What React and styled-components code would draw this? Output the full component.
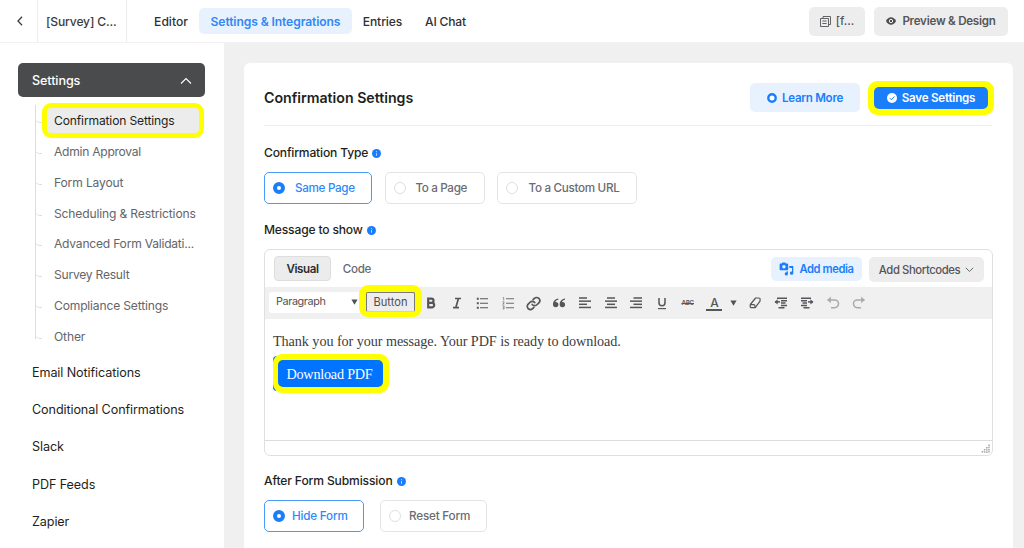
import React from "react";
import styled, { createGlobalStyle, css } from "styled-components";

const blue = "#1a7efb";
const yellow = "#ffff00";

const GlobalStyle = createGlobalStyle`
  *, *::before, *::after { box-sizing: border-box; }
  body {
    margin: 0;
    height: 548px;
    overflow: hidden;
    background: #f0f0f0;
    color: #1e1f21;
    font-family: Inter, "Liberation Sans", sans-serif;
    font-size: 12.6px;
  }
  svg { display: block; flex: none; }
`;

const Page = styled.div`
  height: 548px;
  display: flex;
  flex-direction: column;
  overflow: hidden;
`;

const Header = styled.header`
  height: 43px;
  flex: none;
  display: flex;
  align-items: center;
  background: #fff;
  border-bottom: 1px solid #f1f1f1;
  padding-right: 16px;
`;

const BackCell = styled.div`
  width: 38px;
  height: 100%;
  display: flex;
  align-items: center;
  padding-left: 15px;
  border-right: 1px solid #ececec;
`;

const FormTitle = styled.div`
  width: 89px;
  height: 100%;
  display: flex;
  align-items: center;
  padding: 1px 0 0 8px;
  border-right: 1px solid #ececec;
  font-weight: 500;
  font-size: 12.1px;
  color: #3c3d3f;
`;

const Label = styled.span`
  white-space: nowrap;
  line-height: 16px;
  letter-spacing: ${(p) => p.$ls || 0}px;
`;

const Nav = styled.nav`
  display: flex;
  margin-left: 16px;
  flex: 1;
`;

const NavItem = styled.a`
  height: 26px;
  width: ${(p) => p.$w}px;
  display: flex;
  align-items: center;
  justify-content: center;
  padding-top: 1px;
  border-radius: 5px;
  font-weight: ${(p) => (p.$active ? 600 : 500)};
  font-size: 12.1px;
  color: ${(p) => (p.$active ? "#3087f5" : "#303133")};
  background: ${(p) => (p.$active ? "#e8f2fe" : "transparent")};
`;

const Button = styled.button`
  border: 0;
  margin: 0;
  padding: 0;
  width: ${(p) => p.$w}px;
  height: ${(p) => p.$h || 29}px;
  display: flex;
  align-items: center;
  justify-content: center;
  gap: ${(p) => p.$gap ?? 6}px;
  border-radius: 5px;
  font-family: inherit;
  font-weight: ${(p) => p.$weight || 600};
  font-size: ${(p) => p.$size || 11.6}px;
  color: #55565a;
  background: #ededed;
  ${(p) => p.$tone === "soft" && css`color: ${blue}; background: #e8f2fe;`}
  ${(p) => p.$tone === "primary" && css`color: #fff; background: ${blue};`}
`;

const HeaderActions = styled.div`
  display: flex;
  gap: 9px;
`;

const Body = styled.div`
  flex: 1;
  display: flex;
  min-height: 0;
`;

const Sidebar = styled.aside`
  width: 224px;
  flex: none;
  background: #fff;
  padding: 20px 19px 0 18px;
`;

const SectionHead = styled.div`
  height: 34px;
  display: flex;
  align-items: center;
  justify-content: space-between;
  padding: 1px 13px 0 14px;
  border-radius: 5px;
  background: #4a4b4d;
  color: #fff;
  font-weight: 500;
`;

const SubList = styled.ul`
  list-style: none;
  margin: 0 0 0 17px;
  padding: 8px 0 0;
  position: relative;
  &::before {
    content: "";
    position: absolute;
    left: 0;
    top: 8px;
    width: 1px;
    bottom: 13px;
    background: #dddddf;
  }
`;

const SubItem = styled.li`
  height: 30.85px;
  display: flex;
  align-items: center;
  padding: ${(p) => (p.$first ? 0 : 1.2)}px 0 0 19px;
  color: #646569;
  font-size: 12.1px;
  position: relative;
  &::before {
    content: "";
    position: absolute;
    left: 0;
    top: 11px;
    width: 7px;
    height: 7px;
    border-bottom: 1px solid #dddddf;
    border-bottom-left-radius: 5px;
  }
`;

const SubItemActive = styled.div`
  height: 35px;
  width: 162px;
  margin-left: -12px;
  flex: none;
  display: flex;
  align-items: center;
  border: 5px solid ${yellow};
  border-radius: 9px;
  background: #ececec;
  padding: 2px 0 0 7px;
  color: #1e1f21;
  position: relative;
`;

const SideLink = styled.a`
  height: 37.25px;
  display: flex;
  align-items: center;
  padding-left: 14px;
`;

const SideLinks = styled.div`
  padding-top: 2.4px;
`;

const Panel = styled.main`
  width: 769px;
  margin: 20px 0 0 20px;
  padding: 0 21px 0 20px;
  background: #fff;
  border-radius: 6px 6px 0 0;
  overflow: hidden;
`;

const PanelHead = styled.div`
  height: 63px;
  display: flex;
  align-items: center;
  padding-top: 7px;
  border-bottom: 1px solid #ececec;
`;

const PanelTitle = styled.h1`
  flex: 1;
  margin: 0;
  font-size: 14.2px;
  font-weight: 600;
`;

const Highlight = styled.div`
  display: flex;
  width: max-content;
  margin: ${(p) => p.$m || 0};
  border-style: solid;
  border-color: ${yellow};
  border-width: ${(p) => p.$bw || "6px"};
  border-radius: ${(p) => p.$r || 9}px;
  background: ${yellow};
  position: relative;
`;

const FieldLabel = styled.div`
  display: flex;
  align-items: center;
  gap: 4px;
  height: 18px;
  margin-top: ${(p) => p.$mt}px;
  font-weight: 500;
  font-size: 12.1px;
`;

const RadioRow = styled.div`
  display: flex;
  gap: ${(p) => p.$gap}px;
  margin-top: 10px;
`;

const RadioCard = styled.label`
  width: ${(p) => p.$w}px;
  height: 32px;
  display: flex;
  align-items: center;
  gap: ${(p) => p.$gap}px;
  padding-left: 8px;
  border: 1px solid ${(p) => (p.$on ? "#4c98f6" : "#e4e4e5")};
  border-radius: 5px;
  font-weight: 500;
  font-size: 11.7px;
  color: ${(p) => (p.$on ? "#2f88fa" : "#6b6c70")};
`;

const Dot = styled.span`
  width: 12px;
  height: 12px;
  flex: none;
  border-radius: 50%;
  border: ${(p) => (p.$on ? `4px solid ${blue}` : "1px solid #dedfe1")};
  background: #fff;
`;

const Editor = styled.section`
  height: 207px;
  width: 729px;
  margin-top: 10px;
  display: flex;
  flex-direction: column;
  border: 1px solid #dfdfe0;
  border-radius: 6px;
`;

const EditorTop = styled.div`
  height: 37px;
  flex: none;
  display: flex;
  align-items: center;
  padding: 0 8px 0 9px;
`;

const Tab = styled.div`
  width: ${(p) => p.$w}px;
  height: 25px;
  margin-bottom: 1px;
  padding-top: 1px;
  display: flex;
  align-items: center;
  justify-content: center;
  border: 1px solid ${(p) => (p.$on ? "#dedede" : "transparent")};
  border-radius: 4px;
  background: ${(p) => (p.$on ? "#ececec" : "transparent")};
  font-weight: ${(p) => (p.$on ? 600 : 500)};
  font-size: 11.6px;
  color: ${(p) => (p.$on ? "#2d2e30" : "#696a6d")};
`;

const TopActions = styled.div`
  margin-left: auto;
  display: flex;
  align-items: flex-start;
  gap: 7px;
  padding-top: 2px;
`;

const Toolbar = styled.div`
  height: 32px;
  flex: none;
  display: flex;
  align-items: center;
  padding-left: 4px;
  background: #f0f0f0;
  color: #55565a;
`;

const FormatSelect = styled.div`
  width: 92px;
  height: 21px;
  margin-top: -2px;
  display: flex;
  align-items: center;
  justify-content: space-between;
  padding: 0 3px 0 7px;
  border-radius: 3px;
  background: #fff;
  color: #505154;
  font-size: 10.8px;
`;

const InsertButton = styled.button`
  width: 49px;
  height: 20px;
  padding: 0;
  border: 1px solid #77797d;
  border-bottom-color: #d5d5b0;
  border-radius: 2px;
  background: #ededee;
  color: #4c4d50;
  font-family: inherit;
  font-size: 11.1px;
`;

const Tool = styled.span`
  width: ${(p) => p.$w || 25.7}px;
  flex: none;
  display: flex;
  justify-content: center;
  opacity: ${(p) => (p.$off ? 0.45 : 1)};
`;

const Content = styled.div`
  flex: 1;
  padding: 14px 8px 0;
  font-family: "Liberation Serif", Georgia, serif;
  color: #3c3d40;
  font-size: 14.2px;
`;

const DownloadButton = styled.a`
  width: 105px;
  height: 27px;
  flex: none;
  display: flex;
  align-items: center;
  justify-content: center;
  padding-right: 2px;
  border-radius: 5px;
  background: #0073ff;
  color: #fff;
`;

const DownloadLink = styled.div`
  width: 110px;
  height: 35px;
  display: flex;
  align-items: center;
  margin-top: 6px;
  border-radius: 4px;
  background: #0073ff;
`;

const StatusBar = styled.div`
  height: 15px;
  flex: none;
  border-top: 1px solid #dcdcdd;
  display: flex;
  align-items: flex-end;
  justify-content: flex-end;
  padding: 0 2px 2px;
`;

const Info = () => (
  <svg width="9" height="9" viewBox="0 0 9 9">
    <circle cx="4.5" cy="4.5" r="4.5" fill={blue} />
    <path d="M4.5 4.2v2.5M4.5 2.2v1" stroke="#fff" strokeWidth="0.9" opacity="0.8" />
  </svg>
);

const Caret = () => (
  <svg width="7" height="6" viewBox="0 0 7 6">
    <path d="M0.4 0.5h6.2L3.5 5.7z" fill="#505154" />
  </svg>
);

const Lines = ({ rows }) => (
  <svg width="14" height="14" viewBox="0 0 14 14" stroke="currentColor" strokeWidth="1.5">
    {rows.map(([a, b], i) => (
      <path key={i} d={`M${a} ${2 + i * 3.15}H${b}`} />
    ))}
  </svg>
);

const icons = {
  bold: (
    <svg width="14" height="14" viewBox="0 0 14 14" fill="none" stroke="currentColor" strokeWidth="2.2">
      <path d="M4.2 2.6h3.2a2.1 2.1 0 0 1 0 4.2H4.2zM4.2 6.8h3.7a2.3 2.3 0 0 1 0 4.6H4.2z" />
    </svg>
  ),
  italic: (
    <svg width="14" height="14" viewBox="0 0 14 14" fill="none" stroke="currentColor" strokeWidth="1.7">
      <path d="M5 2.5h6M3 11.7h6M8.4 2.5L5.8 11.7" />
    </svg>
  ),
  ul: (
    <svg width="14" height="14" viewBox="0 0 14 14" stroke="currentColor">
      <path d="M5 2.7h8M5 7.2h8M5 11.7h8" strokeWidth="1.1" />
      <path d="M1.8 2.7h2M1.8 7.2h2M1.8 11.7h2" strokeWidth="2" />
    </svg>
  ),
  ol: (
    <svg width="14" height="14" viewBox="0 0 14 14" fill="none" stroke="currentColor" opacity="0.85">
      <path d="M5 2.7h8M5 7.2h8M5 11.7h8" strokeWidth="1.1" />
      <path d="M1.7 1.5h1v3M1.5 5.9h1.5v1.2l-1.3 1h1.6M1.5 9.9h1.6v3H1.5M2 11.4h1" strokeWidth="0.7" />
    </svg>
  ),
  link: (
    <svg width="15" height="15" viewBox="0 0 24 24" fill="none" stroke="currentColor" strokeWidth="2.7" strokeLinecap="round">
      <path d="M10 13.5a5 5 0 0 0 7.5.5l3-3a5 5 0 0 0-7.1-7.1l-2 2" />
      <path d="M14 10.5a5 5 0 0 0-7.5-.5l-3 3a5 5 0 0 0 7.1 7.1l2-2" />
    </svg>
  ),
  quote: (
    <svg width="14" height="14" viewBox="0 0 14 14" fill="currentColor">
      <path d="M6.3 2.6C3 3 1 5.5 1 8.6a2.7 2.7 0 1 0 2.7-2.7h-.4C3.7 4.9 4.7 4 6.3 3.7zM13 2.6C9.7 3 7.7 5.5 7.7 8.6a2.7 2.7 0 1 0 2.7-2.7H10c.4-1 1.4-1.9 3-2.2z" />
    </svg>
  ),
  left: <Lines rows={[[1, 9], [1, 13], [1, 9], [1, 13]]} />,
  center: <Lines rows={[[3, 11], [1, 13], [3, 11], [1, 13]]} />,
  right: <Lines rows={[[4.5, 13], [1, 13], [4.5, 13], [1, 13]]} />,
  underline: (
    <svg width="14" height="14" viewBox="0 0 14 14" fill="none" stroke="currentColor">
      <path d="M4 2v4.8a3 3 0 0 0 6 0V2" strokeWidth="1.5" />
      <path d="M3 12.6h8" strokeWidth="1.2" />
    </svg>
  ),
  eraser: (
    <svg width="14" height="14" viewBox="0 0 14 14" fill="none" stroke="currentColor" strokeWidth="1.2" strokeLinejoin="round">
      <path d="M7.6 2h3q1.7 0 1.5 1.7l-.2 1.7-4.7 6.200H3.600q-1.500 0-1.400-1.500l.1-1.600z" />
      <path d="M2.600 8.600h2.900q1.500 0 1.500 1.500v1.300" />
    </svg>
  ),
  outdent: (
    <svg width="14" height="14" viewBox="0 0 14 14" stroke="currentColor" strokeWidth="1.5" fill="currentColor">
      <path d="M3 2.2h10M7 4.7h6M7 7.1h4.5M7 9.4h6M4.5 11.8h6" />
      <path d="M1 5.9h5" />
      <path d="M3.6 3.3v5.2L.5 5.9z" stroke="none" />
    </svg>
  ),
  indent: (
    <svg width="14" height="14" viewBox="0 0 14 14" stroke="currentColor" strokeWidth="1.5" fill="currentColor">
      <path d="M1 2.2h10M1 4.7h6M2.5 7.1H7M1 9.4h6M3.5 11.8h6" />
      <path d="M8 5.9h5" />
      <path d="M10.4 3.3v5.2l3.1-2.6z" stroke="none" />
    </svg>
  ),
  undo: (
    <svg width="14" height="14" viewBox="0 0 14 14" fill="none" stroke="currentColor" strokeWidth="1.5">
      <path d="M1.5 4h7.2a3.8 3.8 0 0 1 0 7.7H5" />
      <path d="M4.8.6L1.3 4l3.5 3.3z" fill="currentColor" stroke="none" />
    </svg>
  ),
  redo: (
    <svg width="14" height="14" viewBox="0 0 14 14" fill="none" stroke="currentColor" strokeWidth="1.5">
      <path d="M12.5 4H5.3a3.8 3.8 0 0 0 0 7.7H9" />
      <path d="M9.2.6L12.7 4 9.2 7.3z" fill="currentColor" stroke="none" />
    </svg>
  ),
};

const StrikeText = styled.span`
  font-size: 6.2px;
  font-weight: 600;
  line-height: 10px;
  letter-spacing: -0.2px;
  text-decoration: line-through;
`;

const ColorText = styled.span`
  width: 16px;
  height: 15px;
  margin: 1px 0 0 2px;
  text-align: center;
  font-size: 12px;
  font-weight: 500;
  line-height: 13px;
  border-bottom: 2px solid #55565a;
`;

const subItems = [
  ["Admin Approval", -0.27],
  ["Form Layout", -0.15],
  ["Scheduling & Restrictions", -0.16],
  ["Advanced Form Validati...", -0.23],
  ["Survey Result", -0.24],
  ["Compliance Settings", -0.18],
  ["Other", -0.15],
];

const sideLinks = ["Email Notifications", "Conditional Confirmations", "Slack", "PDF Feeds", "Zapier"];

const Radio = ({ w, on, gap, ls, children }) => (
  <RadioCard $w={w} $on={on} $gap={gap}>
    <Dot $on={on} />
    <Label $ls={ls}>{children}</Label>
  </RadioCard>
);

export default function App() {
  return (
    <Page>
      <GlobalStyle />
      <Header>
        <BackCell>
          <svg width="10" height="12" viewBox="0 0 10 12" fill="none" stroke="#3c3d3f" strokeWidth="1.3">
            <path d="M7 1.8L3 6l4 4.2" />
          </svg>
        </BackCell>
        <FormTitle><Label $ls={-0.15}>[Survey] C...</Label></FormTitle>
        <Nav>
          <NavItem $w={56}><Label>Editor</Label></NavItem>
          <NavItem $active $w={153}><Label $ls={-0.1}>Settings &amp; Integrations</Label></NavItem>
          <NavItem $w={61}><Label $ls={-0.1}>Entries</Label></NavItem>
          <NavItem $w={65}><Label $ls={-0.2}>AI Chat</Label></NavItem>
        </Nav>
        <HeaderActions>
          <Button $w={56} $gap={5} $weight={500}>
            <svg width="11" height="11" viewBox="0 0 11 11" fill="none" stroke="#55565a" strokeWidth="0.9">
              <path d="M3 2.5V.5h7.5v8H8.5M.5 2.5h8v8h-8zM2.3 5h4.4M2.3 7.5h4.4" />
            </svg>
            <Label>[f...</Label>
          </Button>
          <Button $w={134}>
            <svg width="10" height="8" viewBox="0 0 10 8">
              <path d="M0 4C1.2 1.5 3 .3 5 .3S8.800 1.500 10 4C8.800 6.500 7 7.700 5 7.700S1.200 6.500 0 4z" fill="#4c4d50" />
              <circle cx="5" cy="4" r="1.7" fill="#4c4d50" stroke="#eee" strokeWidth="1" />
            </svg>
            <Label $ls={-0.25}>Preview &amp; Design</Label>
          </Button>
        </HeaderActions>
      </Header>
      <Body>
        <Sidebar>
          <SectionHead>
            <Label $ls={-0.1}>Settings</Label>
            <svg width="12" height="8" viewBox="0 0 12 8" fill="none" stroke="#fff" strokeWidth="1.1">
              <path d="M1 6.5L6 1.5l5 5" />
            </svg>
          </SectionHead>
          <SubList>
            <SubItem $first>
              <SubItemActive><Label $ls={-0.15}>Confirmation Settings</Label></SubItemActive>
            </SubItem>
            {subItems.map(([t, ls]) => (
              <SubItem key={t}><Label $ls={ls}>{t}</Label></SubItem>
            ))}
          </SubList>
          <SideLinks>
            {sideLinks.map((t) => (
              <SideLink key={t}><Label $ls={-0.1}>{t}</Label></SideLink>
            ))}
          </SideLinks>
        </Sidebar>
        <Panel>
          <PanelHead>
            <PanelTitle><Label $ls={-0.02}>Confirmation Settings</Label></PanelTitle>
            <Button $w={110} $tone="soft" $gap={5}>
              <svg width="10" height="10" viewBox="0 0 10 10">
                <circle cx="5" cy="5" r="3.7" fill="#fff" stroke={blue} strokeWidth="2.400" />
                <path d="M3.700 3v4L7 5z" fill="#fff" />
              </svg>
              <Label $ls={-0.27}>Learn More</Label>
            </Button>
            <Highlight $m="0 -2px 0 8px">
              <Button $w={114} $h={22} $tone="primary" $gap={5}>
                <svg width="10" height="10" viewBox="0 0 10 10">
                  <circle cx="5" cy="5" r="5" fill="#fff" />
                  <path d="M2.8 5.1l1.6 1.6 3-3.2" fill="none" stroke={blue} strokeWidth="1" />
                </svg>
                <Label $ls={-0.23}>Save Settings</Label>
              </Button>
            </Highlight>
          </PanelHead>
          <FieldLabel $mt={18}><Label $ls={-0.18}>Confirmation Type</Label><Info /></FieldLabel>
          <RadioRow $gap={12.5}>
            <Radio w={108} on gap={10} ls={-0.33}>Same Page</Radio>
            <Radio w={100} gap={10} ls={-0.37}>To a Page</Radio>
            <Radio w={140} gap={10.5} ls={-0.32}>To a Custom URL</Radio>
          </RadioRow>
          <FieldLabel $mt={17}><Label $ls={-0.18}>Message to show</Label><Info /></FieldLabel>
          <Editor>
            <EditorTop>
              <Tab $on $w={57}><Label $ls={-0.4}>Visual</Label></Tab>
              <Tab $w={52}><Label $ls={-0.3}>Code</Label></Tab>
              <TopActions>
                <Button $w={91} $h={24} $tone="soft" $gap={5} $size={11.2}>
                  <svg width="15" height="14" viewBox="0 0 15 14" fill={blue}>
                    <path fillRule="evenodd" d="M1.5 1.5h1.2L3.3.5h3l.6 1h1.4q.9 0 .9.9v4.9q0 .9-.9.9H1.500q-.9 0-.9-.9V2.400q0-.9.9-.9zM4.900 2.900a1.700 1.700 0 1 0 0 3.500 1.700 1.700 0 0 0 0-3.500z" />
                    <path d="M10.3 4h4v7.200a1.700 1.700 0 1 1-1.300-1.700V5.900h-2.700zM7.600 9.200h1.300v2.700a1.600 1.600 0 1 1-1.300-1.500z" />
                  </svg>
                  <Label $ls={-0.4}>Add media</Label>
                </Button>
                <Button $w={115} $h={25} $gap={5} $weight={500} $size={11.3}>
                  <Label $ls={-0.42}>Add Shortcodes</Label>
                  <svg width="9" height="6" viewBox="0 0 9 6" fill="none" stroke="#66676a">
                    <path d="M.8.8l3.7 3.7L8.200.8" />
                  </svg>
                </Button>
              </TopActions>
            </EditorTop>
            <Toolbar>
              <FormatSelect><Label $ls={-0.38}>Paragraph</Label><Caret /></FormatSelect>
              <Highlight $m="-4px -4px 0 -2px" $bw="7px 7px 5px" $r={9}>
                <InsertButton>Button</InsertButton>
              </Highlight>
              {["bold", "italic", "ul", "ol", "link", "quote", "left", "center", "right", "underline"].map((k) => (
                <Tool key={k}>{icons[k]}</Tool>
              ))}
              <Tool><StrikeText>ABC</StrikeText></Tool>
              <Tool><ColorText>A</ColorText></Tool>
              <Tool $w={15}><Caret /></Tool>
              <Tool $w={27}>{icons.eraser}</Tool>
              <Tool>{icons.outdent}</Tool>
              <Tool $w={26.7}>{icons.indent}</Tool>
              <Tool $off>{icons.undo}</Tool>
              <Tool $off>{icons.redo}</Tool>
            </Toolbar>
            <Content>
              <Label $ls={-0.07}>Thank you for your message. Your PDF is ready to download.</Label>
              <DownloadLink>
                <Highlight $bw="6px 6px 6px 5px">
                  <DownloadButton><Label $ls={-0.22}>Download PDF</Label></DownloadButton>
                </Highlight>
              </DownloadLink>
            </Content>
            <StatusBar>
              <svg width="9" height="9" viewBox="0 0 9 9" stroke="#a5a6a8" strokeWidth="1.5" strokeDasharray="1.5 0.7">
                <path d="M8 .5V9M5.8 3V9M3.6 5V9M1.4 7V9" />
              </svg>
            </StatusBar>
          </Editor>
          <FieldLabel $mt={16}><Label $ls={-0.14}>After Form Submission</Label><Info /></FieldLabel>
          <RadioRow $gap={16}>
            <Radio w={100} on gap={7} ls={-0.2}>Hide Form</Radio>
            <Radio w={107} gap={8} ls={-0.2}>Reset Form</Radio>
          </RadioRow>
        </Panel>
      </Body>
    </Page>
  );
}
